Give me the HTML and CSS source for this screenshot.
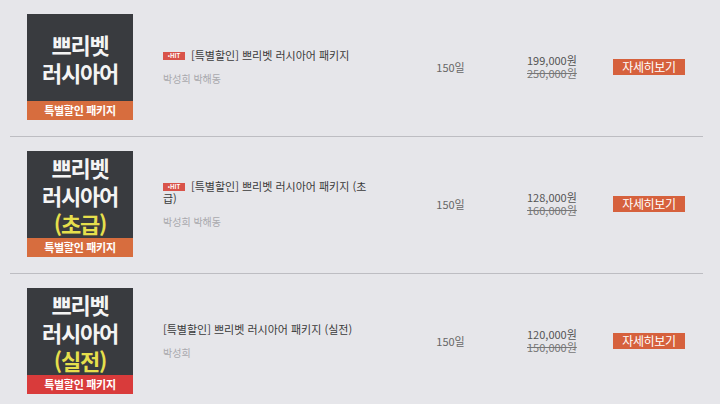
FILE: index.html
```html
<!DOCTYPE html>
<html lang="ko">
<head>
  <meta charset="UTF-8">
  <meta name="viewport" content="width=device-width, initial-scale=1.0">
  <title>쁘리벳 러시아어 패키지</title>
  <link rel="stylesheet" href="styles.css">
</head>
<body>

  <div class="course-list">

    <div class="course-row">
      <div class="thumb">
        <div class="thumb-title">
          <span>쁘리벳</span>
          <span>러시아어</span>
        </div>
        <div class="thumb-band">특별할인 패키지</div>
      </div>
      <div class="course-info">
        <p class="course-title"><span class="hit-badge">•HIT</span>[특별할인] 쁘리벳 러시아어 패키지</p>
        <p class="course-teacher">박성희 박해동</p>
      </div>
      <div class="course-days">150일</div>
      <div class="course-price">
        <span class="price-now">199,000원</span>
        <span class="price-old">250,000원</span>
      </div>
      <button type="button" class="detail-button">자세히보기</button>
    </div>

    <div class="course-row">
      <div class="thumb">
        <div class="thumb-title">
          <span>쁘리벳</span>
          <span>러시아어</span>
          <span class="level">(초급)</span>
        </div>
        <div class="thumb-band">특별할인 패키지</div>
      </div>
      <div class="course-info">
        <p class="course-title"><span class="hit-badge">•HIT</span>[특별할인] 쁘리벳 러시아어 패키지 (초급)</p>
        <p class="course-teacher">박성희 박해동</p>
      </div>
      <div class="course-days">150일</div>
      <div class="course-price">
        <span class="price-now">128,000원</span>
        <span class="price-old">160,000원</span>
      </div>
      <button type="button" class="detail-button">자세히보기</button>
    </div>

    <div class="course-row">
      <div class="thumb">
        <div class="thumb-title">
          <span>쁘리벳</span>
          <span>러시아어</span>
          <span class="level">(실전)</span>
        </div>
        <div class="thumb-band red">특별할인 패키지</div>
      </div>
      <div class="course-info">
        <p class="course-title">[특별할인] 쁘리벳 러시아어 패키지 (실전)</p>
        <p class="course-teacher">박성희</p>
      </div>
      <div class="course-days">150일</div>
      <div class="course-price">
        <span class="price-now">120,000원</span>
        <span class="price-old">150,000원</span>
      </div>
      <button type="button" class="detail-button">자세히보기</button>
    </div>

  </div>

</body>
</html>
```

FILE: styles.css
```css
/* General Styles */
body {
  margin: 0;
  padding: 0;
  background-color: #e6e6ea;
  font-family: "Noto Sans CJK KR", "Noto Sans", sans-serif;
  color: #444;
}

.course-list {
  width: 693px;
  margin-left: 10px;
}

.course-row {
  display: flex;
  align-items: center;
  padding: 14px 0 16px 17px;
  border-bottom: 1px solid #bdbdc2;
}

/* Thumbnail */
.thumb {
  width: 106px;
  height: 106px;
  display: flex;
  flex-direction: column;
  background-color: #393b3f;
  flex-shrink: 0;
}

.thumb-title {
  flex: 1;
  display: flex;
  flex-direction: column;
  align-items: center;
  justify-content: center;
  color: #f4f4f4;
  font-size: 22px;
  font-weight: 700;
  line-height: 28px;
  letter-spacing: -1.2px;
}

.thumb-title .level {
  color: #e6df4c;
}

.thumb-band {
  height: 19px;
  line-height: 19px;
  text-align: center;
  background-color: #d76d3e;
  color: #fff;
  font-size: 11px;
  font-weight: 700;
  letter-spacing: -0.3px;
}

.thumb-band.red {
  background-color: #d93b3b;
}

/* Info */
.course-info {
  width: 214px;
  margin-left: 30px;
}

.course-info p {
  margin: 0;
}

.course-title {
  font-size: 11px;
  line-height: 12px;
  color: #3a3a3a;
}

.hit-badge {
  display: inline-block;
  width: 22px;
  height: 8px;
  margin-right: 6px;
  vertical-align: 2px;
  background-color: #d9534a;
  color: #fff;
  font-size: 6px;
  font-weight: 700;
  line-height: 8px;
  text-align: center;
}

.course-teacher {
  margin-top: 12px !important;
  font-size: 10px;
  line-height: 12px;
  color: #a9a9ad;
}

.course-days {
  width: 147px;
  text-align: center;
  font-size: 11px;
  color: #666;
}

.course-price {
  width: 56px;
  padding-left: 3px;
  display: flex;
  flex-direction: column;
  font-size: 11px;
  line-height: 13px;
}

.price-now {
  color: #555;
}

.price-old {
  color: #777;
  text-decoration: line-through;
}

.detail-button {
  width: 72px;
  height: 16px;
  margin-left: 30px;
  padding: 0;
  border: none;
  background-color: #d6613d;
  color: #fff;
  font-family: inherit;
  font-size: 12px;
  line-height: 16px;
  letter-spacing: -0.3px;
  cursor: pointer;
}
```
